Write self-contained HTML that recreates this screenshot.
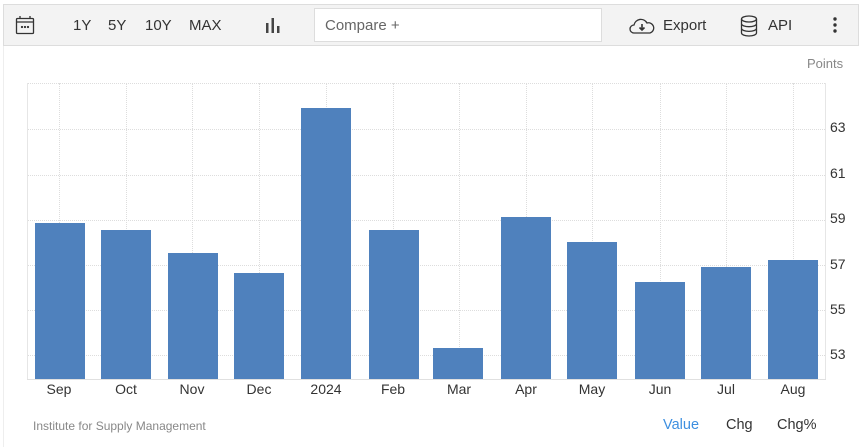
<!DOCTYPE html>
<html><head><meta charset="utf-8"><style>
*{margin:0;padding:0;box-sizing:border-box}
body{width:859px;height:447px;background:#fff;font-family:"Liberation Sans",Arial,sans-serif;position:relative;overflow:hidden}
.a{position:absolute;white-space:nowrap}
.tb{left:3px;top:4px;width:856px;height:42px;background:#f3f3f3;border:1px solid #ddd}
.t{font-size:15px;color:#333;top:17px}
.bar{position:absolute;background:#4f81bd;width:50px;bottom:68px}
.xl{font-size:14px;color:#333;top:381px;width:60px;text-align:center}
.yl{font-size:14px;color:#333;left:830px}
.hg{position:absolute;left:27px;width:798px;border-top:1px dotted #ddd}
.vg{position:absolute;top:83px;height:296px;border-left:1px dotted #ddd}
</style></head><body>
<div class="a" style="left:3px;top:46px;width:1px;height:401px;background:#eee"></div>
<div class="a tb"></div>
<svg class="a" style="left:15px;top:15px" width="20" height="20" viewBox="0 0 20 20" fill="none" stroke="#333" stroke-width="1.3"><rect x="1.5" y="3.5" width="17" height="15" rx="1"/><line x1="1.5" y1="7" x2="18.5" y2="7"/><line x1="5" y1="1" x2="5" y2="4"/><line x1="15" y1="1" x2="15" y2="4"/><circle cx="7" cy="12" r=".5" fill="#333"/><circle cx="10" cy="12" r=".5" fill="#333"/><circle cx="13" cy="12" r=".5" fill="#333"/></svg>
<div class="a t" style="left:73px">1Y</div>
<div class="a t" style="left:108px">5Y</div>
<div class="a t" style="left:145px">10Y</div>
<div class="a t" style="left:189px">MAX</div>
<svg class="a" style="left:265px;top:17px" width="16" height="16"><rect x="1" y="6" width="2.5" height="10" fill="#444"/><rect x="6.5" y="1" width="2.5" height="15" fill="#444"/><rect x="12" y="9" width="2.5" height="7" fill="#444"/></svg>
<div class="a" style="left:314px;top:8px;width:288px;height:34px;background:#fff;border:1px solid #ddd"></div>
<div class="a" style="left:325px;top:17px;font-size:15px;color:#666">Compare +</div>
<svg class="a" style="left:629px;top:16px" width="26" height="20" viewBox="0 0 26 20" fill="none" stroke="#333" stroke-width="1.3"><path d="M7 17H5a4 4 0 0 1 0-8 7 7 0 0 1 13-2 5 5 0 0 1 3 10H7z"/><path d="M13 8v6M10.5 11.5L13 14l2.5-2.5" stroke-width="1.6"/></svg>
<div class="a t" style="left:663px">Export</div>
<svg class="a" style="left:740px;top:15px" width="18" height="22" viewBox="0 0 18 22" fill="none" stroke="#333" stroke-width="1.3"><ellipse cx="9" cy="4" rx="7.5" ry="3"/><path d="M1.5 4v14c0 1.7 3.4 3 7.5 3s7.5-1.3 7.5-3V4M1.5 8.7c0 1.7 3.4 3 7.5 3s7.5-1.3 7.5-3M1.5 13.4c0 1.7 3.4 3 7.5 3s7.5-1.3 7.5-3"/></svg>
<div class="a t" style="left:768px">API</div>
<svg class="a" style="left:832px;top:17px" width="6" height="16"><circle cx="3" cy="2" r="1.7" fill="#333"/><circle cx="3" cy="8" r="1.7" fill="#333"/><circle cx="3" cy="14" r="1.7" fill="#333"/></svg>
<div class="a" style="left:807px;top:56px;font-size:13px;color:#888">Points</div>

<div class="hg" style="top:83px"></div>
<div class="hg" style="top:129px"></div>
<div class="hg" style="top:175px"></div>
<div class="hg" style="top:220px"></div>
<div class="hg" style="top:265px"></div>
<div class="hg" style="top:310px"></div>
<div class="hg" style="top:355px"></div>
<div class="vg" style="left:27px;border-left:1px solid #e6e6e6"></div>
<div class="vg" style="left:59px"></div><div class="vg" style="left:126px"></div><div class="vg" style="left:192px"></div><div class="vg" style="left:259px"></div><div class="vg" style="left:326px"></div><div class="vg" style="left:393px"></div><div class="vg" style="left:459px"></div><div class="vg" style="left:526px"></div><div class="vg" style="left:592px"></div><div class="vg" style="left:660px"></div><div class="vg" style="left:726px"></div><div class="vg" style="left:793px"></div>
<div class="vg" style="left:825px;border-left:1px solid #e6e6e6"></div>
<div class="a" style="left:27px;top:379px;width:799px;height:1px;background:#e0e0e0"></div>

<div class="bar" style="left:35px;top:223px"></div>
<div class="bar" style="left:101px;top:230px"></div>
<div class="bar" style="left:168px;top:253px"></div>
<div class="bar" style="left:234px;top:273px"></div>
<div class="bar" style="left:301px;top:108px"></div>
<div class="bar" style="left:369px;top:230px"></div>
<div class="bar" style="left:433px;top:348px"></div>
<div class="bar" style="left:501px;top:217px"></div>
<div class="bar" style="left:567px;top:242px"></div>
<div class="bar" style="left:635px;top:282px"></div>
<div class="bar" style="left:701px;top:267px"></div>
<div class="bar" style="left:768px;top:260px"></div>

<div class="a xl" style="left:29px">Sep</div>
<div class="a xl" style="left:96px">Oct</div>
<div class="a xl" style="left:162px">Nov</div>
<div class="a xl" style="left:229px">Dec</div>
<div class="a xl" style="left:296px">2024</div>
<div class="a xl" style="left:363px">Feb</div>
<div class="a xl" style="left:429px">Mar</div>
<div class="a xl" style="left:496px">Apr</div>
<div class="a xl" style="left:562px">May</div>
<div class="a xl" style="left:630px">Jun</div>
<div class="a xl" style="left:696px">Jul</div>
<div class="a xl" style="left:763px">Aug</div>

<div class="a yl" style="top:119px">63</div>
<div class="a yl" style="top:165px">61</div>
<div class="a yl" style="top:210px">59</div>
<div class="a yl" style="top:256px">57</div>
<div class="a yl" style="top:301px">55</div>
<div class="a yl" style="top:346px">53</div>

<div class="a" style="left:33px;top:419px;font-size:12px;color:#888">Institute for Supply Management</div>
<div class="a" style="left:663px;top:417px;font-size:14.5px;color:#3d8fe0">Value</div>
<div class="a" style="left:726px;top:417px;font-size:14.5px;color:#333">Chg</div>
<div class="a" style="left:777px;top:417px;font-size:14.5px;color:#333">Chg%</div>
</body></html>
